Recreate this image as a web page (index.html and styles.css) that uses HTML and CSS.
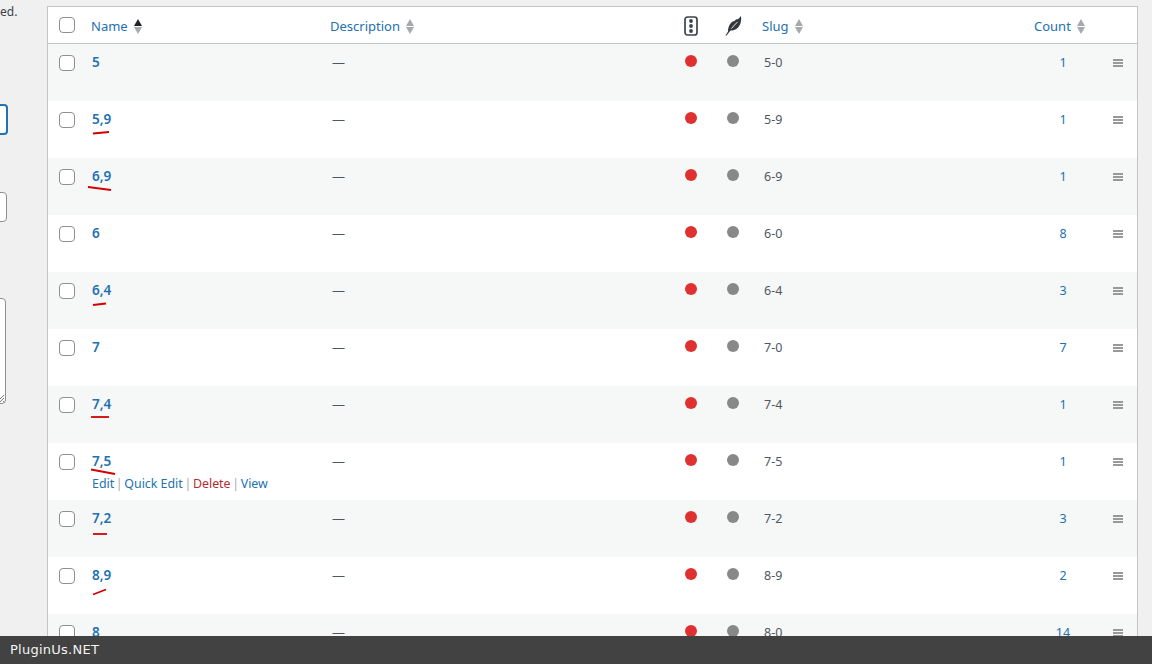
FILE: index.html
```html
<!DOCTYPE html>
<html lang="en">
<head>
<meta charset="utf-8">
<title>Terms</title>
<link rel="stylesheet" href="styles.css">
</head>
<body>
<div class="page">
  <aside class="side">
    <p class="side-note">ed.</p>
    <div class="field field-focus"></div>
    <div class="field field-plain"></div>
    <div class="field field-area">
      <svg class="grip" width="8" height="8" viewBox="0 0 8 8"><path d="M0 7 7 0M3 7 7 3M6 7 7 6" stroke="#777" fill="none"/></svg>
    </div>
  </aside>
  <main class="main">
    <table class="terms">
      <colgroup>
        <col class="c-check"><col class="c-name"><col class="c-desc"><col class="c-light"><col class="c-pen"><col class="c-slug"><col class="c-count"><col class="c-drag">
      </colgroup>
      <thead>
        <tr>
          <th class="cb"><span class="box"></span></th>
          <th class="th-name"><a class="sort">Name<span class="arrows"><i class="up dark"></i><i class="down"></i></span></a></th>
          <th class="th-desc"><a class="sort">Description<span class="arrows"><i class="up"></i><i class="down"></i></span></a></th>
          <th class="ico">
            <svg width="14" height="20" viewBox="0 0 14 20"><rect x="1" y="1" width="12" height="18" rx="2.5" fill="#fff" stroke="#3c434a" stroke-width="1.7"/><circle cx="7" cy="5" r="1.9" fill="#3c434a"/><circle cx="7" cy="10" r="1.9" fill="#3c434a"/><circle cx="7" cy="15" r="1.9" fill="#3c434a"/></svg>
          </th>
          <th class="ico">
            <svg width="17" height="20" viewBox="0 0 17 20"><path d="M16 0C16.500 3 16 7 14.500 9.500 13 12.500 9.500 14.500 5.500 14.500L2 19 1 20 0.600 19.500 3 15.500C3 11 5 7 8.500 5L9 5.800C10 4 11.500 3 12.500 3L12.800 3.600Z" fill="#33383d"/><path d="M12.500 6C10.500 8 8.500 10 6.500 12.500" stroke="#fff" stroke-width="0.900" fill="none"/></svg>
          </th>
          <th class="th-slug"><a class="sort">Slug<span class="arrows"><i class="up"></i><i class="down"></i></span></a></th>
          <th class="num"><a class="sort">Count<span class="arrows"><i class="up"></i><i class="down"></i></span></a></th>
          <th></th>
        </tr>
      </thead>
      <tbody>
        <tr><td class="cb"><span class="box"></span></td><td class="name"><a>5</a></td><td class="desc">—</td><td class="ico"><span class="dot red"></span></td><td class="ico"><span class="dot grey"></span></td><td class="slug">5-0</td><td class="num"><a>1</a></td><td class="drag"><span class="bars"></span></td></tr>
        <tr><td class="cb"><span class="box"></span></td><td class="name"><a>5,9</a></td><td class="desc">—</td><td class="ico"><span class="dot red"></span></td><td class="ico"><span class="dot grey"></span></td><td class="slug">5-9</td><td class="num"><a>1</a></td><td class="drag"><span class="bars"></span></td></tr>
        <tr><td class="cb"><span class="box"></span></td><td class="name"><a>6,9</a></td><td class="desc">—</td><td class="ico"><span class="dot red"></span></td><td class="ico"><span class="dot grey"></span></td><td class="slug">6-9</td><td class="num"><a>1</a></td><td class="drag"><span class="bars"></span></td></tr>
        <tr><td class="cb"><span class="box"></span></td><td class="name"><a>6</a></td><td class="desc">—</td><td class="ico"><span class="dot red"></span></td><td class="ico"><span class="dot grey"></span></td><td class="slug">6-0</td><td class="num"><a>8</a></td><td class="drag"><span class="bars"></span></td></tr>
        <tr><td class="cb"><span class="box"></span></td><td class="name"><a>6,4</a></td><td class="desc">—</td><td class="ico"><span class="dot red"></span></td><td class="ico"><span class="dot grey"></span></td><td class="slug">6-4</td><td class="num"><a>3</a></td><td class="drag"><span class="bars"></span></td></tr>
        <tr><td class="cb"><span class="box"></span></td><td class="name"><a>7</a></td><td class="desc">—</td><td class="ico"><span class="dot red"></span></td><td class="ico"><span class="dot grey"></span></td><td class="slug">7-0</td><td class="num"><a>7</a></td><td class="drag"><span class="bars"></span></td></tr>
        <tr><td class="cb"><span class="box"></span></td><td class="name"><a>7,4</a></td><td class="desc">—</td><td class="ico"><span class="dot red"></span></td><td class="ico"><span class="dot grey"></span></td><td class="slug">7-4</td><td class="num"><a>1</a></td><td class="drag"><span class="bars"></span></td></tr>
        <tr><td class="cb"><span class="box"></span></td><td class="name"><a>7,5</a><div class="actions"><a>Edit</a> <b>|</b> <a>Quick Edit</a> <b>|</b> <a class="del">Delete</a> <b>|</b> <a>View</a></div></td><td class="desc">—</td><td class="ico"><span class="dot red"></span></td><td class="ico"><span class="dot grey"></span></td><td class="slug">7-5</td><td class="num"><a>1</a></td><td class="drag"><span class="bars"></span></td></tr>
        <tr><td class="cb"><span class="box"></span></td><td class="name"><a>7,2</a></td><td class="desc">—</td><td class="ico"><span class="dot red"></span></td><td class="ico"><span class="dot grey"></span></td><td class="slug">7-2</td><td class="num"><a>3</a></td><td class="drag"><span class="bars"></span></td></tr>
        <tr><td class="cb"><span class="box"></span></td><td class="name"><a>8,9</a></td><td class="desc">—</td><td class="ico"><span class="dot red"></span></td><td class="ico"><span class="dot grey"></span></td><td class="slug">8-9</td><td class="num"><a>2</a></td><td class="drag"><span class="bars"></span></td></tr>
        <tr><td class="cb"><span class="box"></span></td><td class="name"><a>8</a></td><td class="desc">—</td><td class="ico"><span class="dot red"></span></td><td class="ico"><span class="dot grey"></span></td><td class="slug">8-0</td><td class="num"><a>14</a></td><td class="drag"><span class="bars"></span></td></tr>
      </tbody>
    </table>
  </main>
</div>
<svg class="marks" width="1152" height="664" viewBox="0 0 1152 664" aria-hidden="true">
  <g stroke="#d40000" stroke-width="1.8" fill="none">
    <path d="M93 133.500 109 132"/>
    <path d="M88 187 111 190"/>
    <path d="M93 305 106 303.500"/>
    <path d="M91 417H109"/>
    <path d="M91 469.500 115 474"/>
    <path d="M93 534H107"/>
    <path d="M93 594.500 106 589.500"/>
  </g>
</svg>
<footer class="bar">PluginUs.NET</footer>
</body>
</html>
```
FILE: styles.css
```css
* { box-sizing: border-box; }
html, body { margin: 0; height: 100%; }
body {
  overflow: hidden;
  background: #f0f0f1;
  font-family: "Noto Sans", "Open Sans", sans-serif;
  font-size: 13px;
  color: #50575e;
}
.page { display: flex; align-items: flex-start; padding-top: 6px; }
.side { width: 47px; flex: none; height: 620px; }
.side-note { margin: -2px 0 0; font-size: 12px; line-height: 16px; color: #3c434a; }
.field { background: #fff; border: 1px solid #8c8f94; border-radius: 4px; margin-left: -40px; }
.field-focus { width: 48px; height: 31px; margin-top: 84px; border: 2px solid #2271b1; }
.field-plain { width: 47px; height: 30px; margin-top: 57px; }
.field-area { width: 46px; height: 106px; margin-top: 76px; position: relative; }
.grip { position: absolute; right: 0; bottom: 0; }
.main { width: 1091px; flex: none; }
.terms {
  width: 100%;
  table-layout: fixed;
  border-collapse: separate;
  border-spacing: 0;
  background: #fff;
  border: 1px solid #c3c4c7;
}
.c-check { width: 36px; }
.c-name { width: 238px; }
.c-desc { width: 348px; }
.c-light { width: 42px; }
.c-pen { width: 42px; }
.c-slug { width: 270px; }
.c-count { width: 75px; }
.terms th {
  height: 37px;
  padding: 2px 0 0;
  border-bottom: 1px solid #c3c4c7;
  font-weight: 400;
  text-align: left;
  vertical-align: middle;
}
.terms th.th-name { padding-left: 7px; }
.terms th.th-desc { padding-left: 8px; }
.terms th.th-slug { padding-left: 8px; }
.terms th.num { padding-left: 10px; }
.terms td { height: 57px; padding: 9px 0 0; vertical-align: top; line-height: 19px; }
.terms tbody tr:nth-child(odd) { background: #f6f7f7; }
.terms th.cb { padding: 0 0 0 11px; }
.terms td.cb { padding: 11px 0 0 11px; }
.terms th.ico { padding: 0; text-align: center; }
.terms td.ico { padding: 11px 0 0; text-align: center; }
.terms th.ico svg { display: block; margin: 2px auto 0; }
.terms td.desc { padding-left: 10px; }
.terms td.slug { padding-left: 10px; font-size: 12.500px; }
.terms td.num { padding-left: 3px; font-size: 12.500px; text-align: center; }
.terms td.drag { padding: 15px 0 0; text-align: center; }
.terms td.name { padding: 9px 0 0 8px; }
a { color: #2271b1; text-decoration: none; }
.box {
  display: block;
  width: 16px;
  height: 16px;
  background: #fff;
  border: 1px solid #8c8f94;
  border-radius: 4px;
}
.sort { display: inline-flex; align-items: center; gap: 6px; line-height: 19px; }
.arrows { display: inline-flex; flex-direction: column; gap: 1px; }
.arrows i { display: block; width: 0; height: 0; border-left: 4.500px solid transparent; border-right: 4.500px solid transparent; }
.arrows .up { border-bottom: 7px solid #a7aaad; }
.arrows .down { border-top: 7px solid #a7aaad; }
.arrows .up.dark { border-bottom-color: #1d2327; }
.name > a { font-weight: 600; font-size: 13.500px; }
.actions { font-size: 12.400px; line-height: 16px; margin-top: 5px; color: #a7aaad; }
.actions b { margin: 0 -1.600px; font-weight: 400; }
.actions .del { color: #b32d2e; }
.dot { display: block; width: 12px; height: 12px; border-radius: 50%; margin: 0 auto; }
.red { background: #e03131; }
.grey { background: #888; }
.bars { display: block; width: 10px; height: 8px; margin: 0 auto; border-top: 2px solid #999; border-bottom: 2px solid #999; position: relative; }
.bars::after { content: ""; position: absolute; left: 0; right: 0; top: 1px; height: 2px; background: #999; }
.marks { position: fixed; left: 0; top: 0; pointer-events: none; }
.bar {
  position: fixed;
  left: 0;
  right: 0;
  bottom: 0;
  height: 28px;
  padding-left: 10px;
  background: #424242;
  color: #f4f4f4;
  font-family: "DejaVu Sans", sans-serif;
  font-size: 13px;
  letter-spacing: 0.250px;
  line-height: 28px;
}
```
